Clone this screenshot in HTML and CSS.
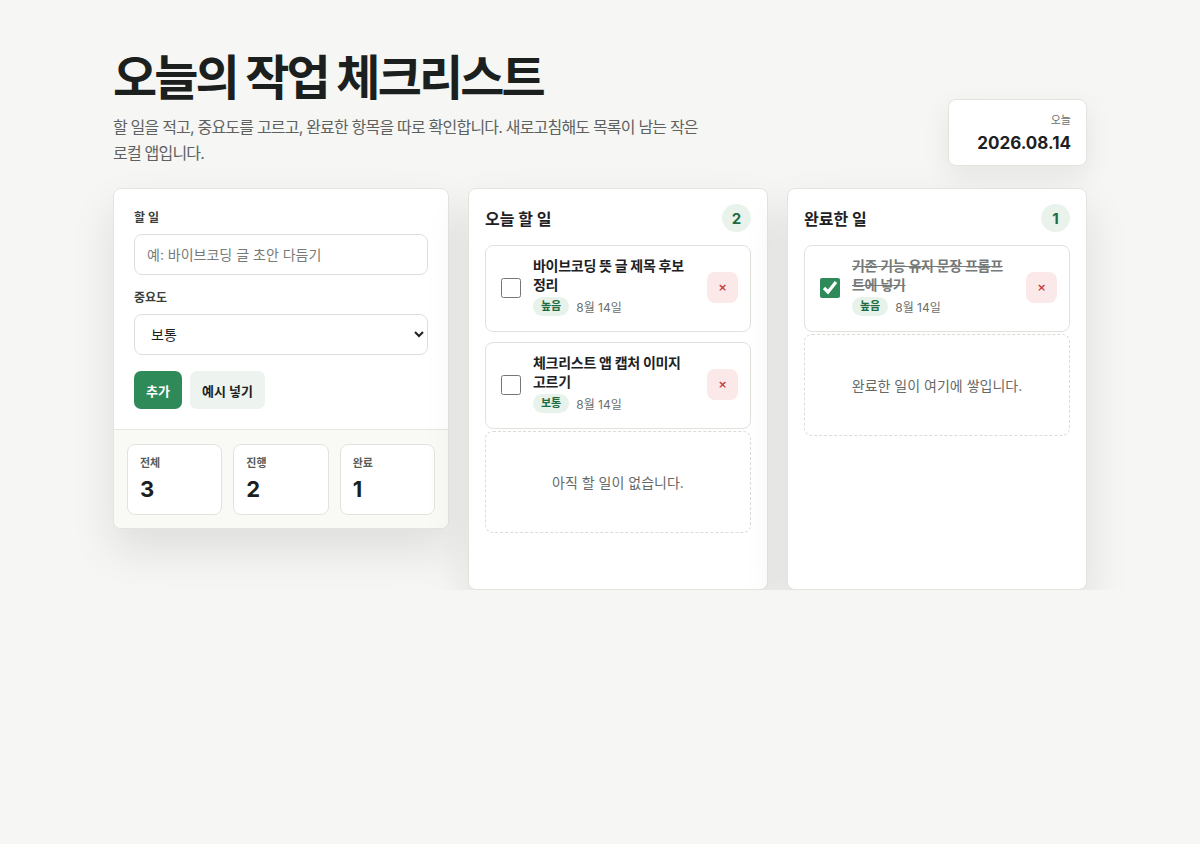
FILE: index.html
```html
<!DOCTYPE html>
<html lang="ko">
<head>
<meta charset="utf-8">
<title>오늘의 작업 체크리스트</title>
<link rel="stylesheet" href="styles.css">
</head>
<body>
<main class="page">
  <header class="top">
    <div class="intro">
      <h1 class="title">오늘의 작업 체크리스트</h1>
      <p class="lead">할 일을 적고, 중요도를 고르고, 완료한 항목을 따로 확인합니다. 새로고침해도 목록이 남는 작은 로컬 앱입니다.</p>
    </div>
    <div class="date-card">
      <div class="date-label">오늘</div>
      <div class="date-value">2026.08.14</div>
    </div>
  </header>

  <section class="board">
    <div class="card form-card">
      <form class="form">
        <label class="field-label" for="task">할 일</label>
        <input id="task" class="text-input" type="text" placeholder="예: 바이브코딩 글 초안 다듬기">
        <label class="field-label gap-top" for="prio">중요도</label>
        <select id="prio" class="select">
          <option>높음</option>
          <option selected>보통</option>
          <option>낮음</option>
        </select>
        <div class="actions">
          <button type="button" class="btn btn-primary">추가</button>
          <button type="button" class="btn btn-soft">예시 넣기</button>
        </div>
      </form>
      <div class="stats">
        <div class="stat"><div class="stat-label">전체</div><div class="stat-num">3</div></div>
        <div class="stat"><div class="stat-label">진행</div><div class="stat-num">2</div></div>
        <div class="stat"><div class="stat-label">완료</div><div class="stat-num">1</div></div>
      </div>
    </div>

    <div class="card list-card">
      <div class="list-head">
        <h2 class="list-title">오늘 할 일</h2>
        <span class="count">2</span>
      </div>
      <div class="items">
        <div class="item">
          <input type="checkbox" class="check">
          <div class="item-body">
            <div class="item-title">바이브코딩 뜻 글 제목 후보 정리</div>
            <div class="meta"><span class="tag">높음</span><span class="when">8월 14일</span></div>
          </div>
          <button type="button" class="del">×</button>
        </div>
        <div class="item">
          <input type="checkbox" class="check">
          <div class="item-body">
            <div class="item-title">체크리스트 앱 캡처 이미지 고르기</div>
            <div class="meta"><span class="tag">보통</span><span class="when">8월 14일</span></div>
          </div>
          <button type="button" class="del">×</button>
        </div>
      </div>
      <div class="empty">아직 할 일이 없습니다.</div>
    </div>

    <div class="card list-card">
      <div class="list-head">
        <h2 class="list-title">완료한 일</h2>
        <span class="count">1</span>
      </div>
      <div class="items">
        <div class="item done">
          <input type="checkbox" class="check" checked>
          <div class="item-body">
            <div class="item-title">기존 기능 유지 문장 프롬프트에 넣기</div>
            <div class="meta"><span class="tag">높음</span><span class="when">8월 14일</span></div>
          </div>
          <button type="button" class="del">×</button>
        </div>
      </div>
      <div class="empty">완료한 일이 여기에 쌓입니다.</div>
    </div>
  </section>
</main>
</body>
</html>
```

FILE: styles.css
```css
* { box-sizing: border-box; }

html, body {
  margin: 0;
  padding: 0;
  background: #f6f6f4;
  color: #1d211f;
  font-family: Inter, "Noto Sans CJK KR", sans-serif;
}

.page {
  width: 974px;
  margin: 0 auto;
  padding-top: 48px;
}

.top {
  display: flex;
  justify-content: space-between;
  align-items: flex-end;
}

.title {
  margin: 0;
  font-size: 48px;
  line-height: 60px;
  font-weight: 700;
  letter-spacing: -0.06em;
  color: #1b1f1d;
}

.lead {
  margin: 6px 0 0;
  width: 600px;
  font-size: 16px;
  line-height: 26px;
  color: #5d625f;
  letter-spacing: -0.05em;
}

.date-card {
  width: 139px;
  background: #fff;
  border: 1px solid #e4e4df;
  border-radius: 8px;
  padding: 12px 15px 10px;
  text-align: right;
  box-shadow: 0 10px 28px rgba(30, 40, 32, 0.08);
}

.date-label {
  font-size: 11px;
  color: #6b6f6c;
  line-height: 16px;
}

.date-value {
  margin-top: 3px;
  font-size: 17px;
  font-weight: 700;
  line-height: 24px;
  color: #1d211f;
}

.board {
  margin-top: 22px;
  display: grid;
  grid-template-columns: 336px 300px 300px;
  gap: 19px;
  align-items: start;
}

.card {
  background: #fff;
  border: 1px solid #e4e4df;
  border-radius: 8px;
  box-shadow: 0 20px 44px rgba(30, 40, 32, 0.11);
}

.form-card { overflow: hidden; }

.form {
  padding: 21px 20px 20px;
  display: flex;
  flex-direction: column;
}

.field-label {
  font-size: 12px;
  font-weight: 700;
  color: #3a3e3c;
  line-height: 16px;
  margin-bottom: 8px;
}

.gap-top { margin-top: 15px; }

.text-input,
.select {
  width: 100%;
  height: 41px;
  border: 1px solid #dfdfda;
  border-radius: 8px;
  background: #fff;
  font-family: inherit;
  font-size: 14px;
  color: #1d211f;
  padding: 0 12px;
}

.text-input::placeholder { color: #777b78; }

.select { padding: 0 10px 0 12px; }

.actions {
  display: flex;
  gap: 8px;
  margin-top: 16px;
}

.btn {
  height: 38px;
  border: none;
  border-radius: 7px;
  padding: 0 12px;
  font-family: inherit;
  font-size: 13px;
  font-weight: 700;
}

.btn-primary { background: #2e8a59; color: #fff; }
.btn-soft { background: #edf3ee; color: #1d211f; }

.stats {
  border-top: 1px solid #e6e6e1;
  background: #f9f9f6;
  padding: 14px 13px 13px;
  display: grid;
  grid-template-columns: repeat(3, 1fr);
  gap: 11px;
}

.stat {
  background: #fff;
  border: 1px solid #e3e3de;
  border-radius: 8px;
  padding: 11px 12px 10px;
  height: 71px;
}

.stat-label {
  font-size: 11px;
  font-weight: 700;
  color: #585c5a;
  line-height: 14px;
}

.stat-num {
  margin-top: 5px;
  font-size: 22px;
  font-weight: 700;
  line-height: 28px;
  color: #1b1f1d;
}

.list-card {
  min-height: 402px;
  padding: 15px 16px 16px;
}

.list-head {
  display: flex;
  align-items: center;
  justify-content: space-between;
  height: 28px;
}

.list-title {
  margin: 0;
  font-size: 16px;
  font-weight: 700;
  color: #1d211f;
}

.count {
  width: 29px;
  height: 28px;
  border-radius: 50%;
  background: #e9f2eb;
  color: #1e6b41;
  font-size: 15px;
  font-weight: 700;
  display: flex;
  align-items: center;
  justify-content: center;
}

.items {
  margin-top: 13px;
  display: flex;
  flex-direction: column;
  gap: 10px;
}

.item {
  display: flex;
  align-items: center;
  gap: 12px;
  border: 1px solid #e2e2dd;
  border-radius: 8px;
  padding: 8px 12px 13px 15px;
  min-height: 87px;
}

.check {
  margin: 3px 0 0;
  width: 20px;
  height: 20px;
  flex: none;
  accent-color: #2e8a59;
}

.del { margin-top: 3px; }

.item-body { flex: 1; min-width: 0; }

.item-title {
  font-size: 14px;
  font-weight: 700;
  line-height: 19px;
  color: #1d211f;
  letter-spacing: -0.02em;
  word-break: break-all;
}

.done .item-title {
  color: #767a78;
  text-decoration: line-through;
}

.meta {
  margin-top: 3px;
  display: flex;
  align-items: center;
  gap: 7px;
}

.tag {
  background: #e7f2ea;
  color: #1e6b41;
  font-size: 11px;
  font-weight: 700;
  line-height: 19px;
  height: 19px;
  padding: 0 8px;
  border-radius: 999px;
}

.when {
  font-size: 12px;
  color: #6b6f6c;
}

.del {
  flex: none;
  width: 31px;
  height: 31px;
  border: none;
  border-radius: 8px;
  background: #fbe9ea;
  color: #c23a3a;
  font-size: 11px;
  font-weight: 700;
  padding: 0;
  font-family: "DejaVu Sans", sans-serif;
}

.empty {
  margin-top: 2px;
  height: 102px;
  border: 1px dashed #dcdcd6;
  border-radius: 8px;
  display: flex;
  align-items: center;
  justify-content: center;
  font-size: 14px;
  color: #656966;
}
```
